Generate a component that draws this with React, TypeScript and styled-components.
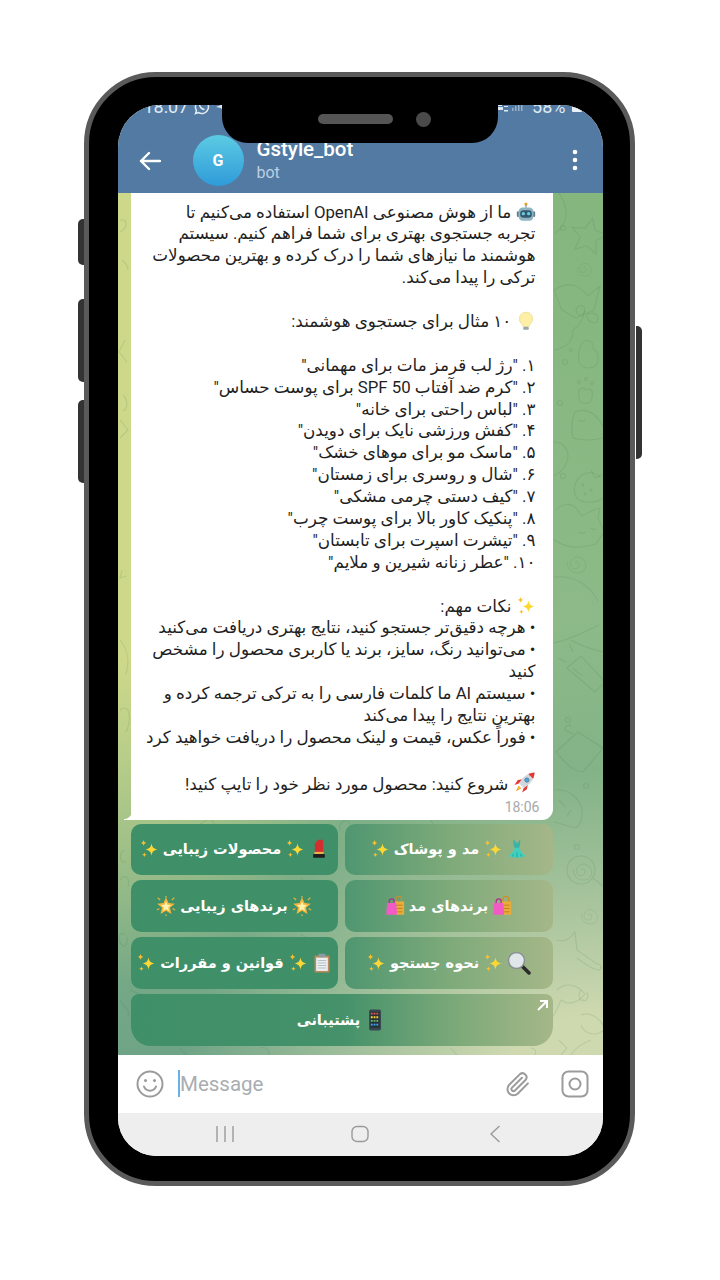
import React from "react";
import styled, { createGlobalStyle } from "styled-components";

const Global = createGlobalStyle`
  html, body { margin: 0; padding: 0; background: #fff; }
  body { width: 720px; height: 1280px; overflow: hidden; font-family: Roboto, "DejaVu Sans", sans-serif; }
`;

const Page = styled.div`
  width: 720px;
  height: 1280px;
  box-sizing: border-box;
  padding: 72px 85px 94px 84px;
`;
const Phone = styled.div`
  position: relative;
  height: 1114px;
  box-sizing: border-box;
  border: 5.5px solid #5a5a5a;
  border-radius: 72px;
  background: #000;
  padding: 27.5px 27.5px 25px 28.5px;
`;
const SideKey = styled.div<{ $side: "left" | "right"; $top: number; $h: number }>`
  position: absolute;
  ${(p) => p.$side}: -11.5px;
  top: ${(p) => p.$top}px;
  width: 6px;
  height: ${(p) => p.$h}px;
  background: #333;
  border-radius: ${(p) => (p.$side === "left" ? "5px 0 0 5px" : "0 5px 5px 0")};
`;
const Notch = styled.div`
  position: absolute;
  left: 132.5px;
  top: 26.5px;
  width: 276px;
  height: 39px;
  background: #000;
  border-radius: 0 0 26px 26px;
  z-index: 3;
  display: flex;
  align-items: center;
  justify-content: center;
  gap: 22.5px;
  padding: 0 0 8px 30px;
  box-sizing: border-box;
`;
const Speaker = styled.div`
  width: 75px;
  height: 10px;
  border-radius: 5px;
  background: #555;
`;
const Lens = styled.div`
  width: 15px;
  height: 15px;
  border-radius: 50%;
  background: #4a4a4a;
`;
const Screen = styled.div`
  height: 100%;
  border-radius: 42px 42px 38px 38px;
  overflow: hidden;
  display: flex;
  flex-direction: column;
  background: #fff;
`;
const Header = styled.header`
  height: 88px;
  flex: none;
  background: #527aa2;
  color: #fff;
  display: flex;
  flex-direction: column;
`;
const StatusBar = styled.div`
  height: 20px;
  margin-top: -8px;
  padding: 0 21px 0 26px;
  display: flex;
  align-items: center;
  justify-content: space-between;
  font-size: 18px;
  color: #dfe9f2;
`;
const StatusGroup = styled.div`
  display: flex;
  align-items: center;
  gap: 6px;
`;
const TitleRow = styled.div`
  flex: 1;
  display: flex;
  align-items: center;
  padding: 10px 25px 0 21px;
`;
const BackButton = styled.div`
  width: 54px;
  display: flex;
  margin-top: 3px;
`;
const Avatar = styled.div`
  width: 51px;
  height: 51px;
  border-radius: 50%;
  background: linear-gradient(180deg, #5ccbe3 0%, #2f9bd9 100%);
  display: flex;
  align-items: center;
  justify-content: center;
  font: 700 16px Roboto, sans-serif;
  margin-top: 2px;
`;
const TitleBlock = styled.div`
  flex: 1;
  margin-left: 13px;
  margin-top: 1px;
`;
const BotName = styled.div`
  font: 500 20.5px/26px Roboto, sans-serif;
`;
const BotStatus = styled.div`
  font: 400 16px/22px Roboto, sans-serif;
  color: #bcd0e2;
`;
const Chat = styled.main`
  position: relative;
  flex: none;
  display: flex;
  flex-direction: column;
  padding: 0 50px 9px 12px;
  background:
    radial-gradient(ellipse 330px 620px at 0% 20%, #cdd88a 0%, #cdd88a 48%, rgba(205, 216, 138, 0) 100%),
    radial-gradient(ellipse 420px 330px at 100% 105%, #cfd9b0 0%, #cfd9b0 25%, rgba(207, 217, 176, 0) 100%),
    linear-gradient(180deg, #84b67e 0%, #8dba88 50%, #6fa486 100%);
`;
const Doodles = styled.svg`
  position: absolute;
  inset: 0;
  width: 100%;
  height: 100%;
`;
const Bubble = styled.section`
  position: relative;
  width: 422px;
  height: 627px;
  flex: none;
  margin-left: 1px;
  box-sizing: border-box;
  background: #fff;
  border-radius: 0 0 11px 0;
  padding: 9px 17px 0 0;
  color: #1f1f1f;
  font-family: Roboto, "DejaVu Sans", sans-serif;
  font-size: 16.8px;
  line-height: 21.9px;

  &::before {
    content: "";
    position: absolute;
    left: -7px;
    bottom: 0;
    width: 8px;
    height: 9px;
    background: radial-gradient(circle at 0 0, transparent 7.5px, #fff 8.5px);
  }
`;
const Line = styled.div`
  direction: rtl;
  white-space: nowrap;
  height: 21.9px;
`;
const Time = styled.div`
  position: absolute;
  right: 13px;
  bottom: 5px;
  font: 400 14px/16px Roboto, sans-serif;
  color: #a8a8a8;
`;
const Keyboard = styled.nav`
  position: relative;
  margin-top: 4px;
  direction: rtl;
  display: grid;
  grid-template-columns: 208px 207px;
  grid-auto-rows: 51.75px;
  gap: 5px 7px;
`;
const KeyButton = styled.button<{ $tone: "left" | "right" | "wide" }>`
  border: 0;
  padding: 0;
  direction: rtl;
  border-radius: ${(p) => (p.$tone === "wide" ? "8px 8px 20px 20px" : "10px")};
  position: relative;
  display: flex;
  align-items: center;
  justify-content: center;
  gap: 4px;
  color: #fff;
  font: 700 14.5px "DejaVu Sans", sans-serif;
  white-space: nowrap;
  ${(p) => (p.$tone === "wide" ? "grid-column: 1 / span 2;" : "")}
  background: ${(p) =>
    p.$tone === "left"
      ? "#3f8f68"
      : p.$tone === "right"
        ? "linear-gradient(90deg, #4f9670 0%, #7eaa7a 50%, #a5b788 100%)"
        : "linear-gradient(90deg, #3f8f68 0%, #44916a 50%, #7eaa7a 78%, #a5b788 100%)"};
`;
const Corner = styled.svg`
  position: absolute;
  top: 5px;
  right: 4px;
`;
const Composer = styled.div`
  height: 58px;
  flex: none;
  display: flex;
  align-items: center;
  padding: 0 14px 0 18px;
  background: #fff;
`;
const Caret = styled.div`
  width: 2.5px;
  height: 27px;
  margin-left: 14px;
  background: #68b0e6;
`;
const Placeholder = styled.div`
  flex: 1;
  font: 400 20.5px Roboto, sans-serif;
  color: #a9adb1;
`;
const ComposerIcons = styled.div`
  display: flex;
  align-items: center;
  gap: 29px;
`;
const NavBar = styled.div`
  flex: 1;
  background: #eeeeee;
  display: grid;
  grid-template-columns: 1fr 1fr 1fr;
  padding: 0 39.5px;
  align-items: center;
  justify-items: center;
`;

const Emoji = styled.svg<{ $s?: number }>`
  display: inline-block;
  width: ${(p) => p.$s ?? 20}px;
  height: ${(p) => p.$s ?? 20}px;
  vertical-align: -4px;
  flex: none;
`;

const Sparkles = () => (
  <Emoji viewBox="0 0 24 24">
    <path fill="#fdd835" d="M15 5c.8 5 2.500 6.600 7.500 7.500-5 .9-6.700 2.500-7.500 7.500-.8-5-2.500-6.600-7.500-7.500C12.500 11.600 14.200 10 15 5z" />
    <path fill="#fbc02d" d="M5.500 1c.4 2.500 1.200 3.300 3.500 3.700C6.700 5.100 5.900 5.900 5.500 8.500 5.100 5.900 4.300 5.100 2 4.700 4.300 4.300 5.100 3.500 5.500 1z" />
    <path fill="#fbc02d" d="M6.500 16c.3 2 1 2.700 3 3-2 .3-2.700 1-3 3-.3-2-1-2.700-3-3 2-.3 2.700-1 3-3z" />
  </Emoji>
);
const Robot = () => (
  <Emoji viewBox="0 0 24 24">
    <circle cx="12" cy="2.500" r="2" fill="#f5a623" />
    <rect x="11.300" y="3" width="1.400" height="4" fill="#78909c" />
    <rect x="1" y="11" width="3" height="7" rx="1.500" fill="#607d8b" />
    <rect x="20" y="11" width="3" height="7" rx="1.500" fill="#607d8b" />
    <rect x="3" y="6.500" width="18" height="16" rx="5" fill="#8fb4c4" />
    <rect x="5" y="10" width="14" height="9" rx="4" fill="#37586b" />
    <circle cx="8.800" cy="14" r="2" fill="#5fd0e6" />
    <circle cx="15.200" cy="14" r="2" fill="#5fd0e6" />
  </Emoji>
);
const Bulb = () => (
  <Emoji viewBox="0 0 24 24">
    <path fill="#fdf0a6" stroke="#eadf95" d="M12 1.500a8 8 0 0 0-5 14.200c1 .9 1.300 1.800 1.400 3.300h7.200c.1-1.500.4-2.400 1.400-3.300A8 8 0 0 0 12 1.500z" />
    <rect x="8.700" y="19" width="6.600" height="3.600" rx="1.400" fill="#9aa7ad" />
  </Emoji>
);
const Rocket = () => (
  <Emoji viewBox="0 0 24 24" $s={23}>
    <path fill="#e53935" d="M6 13l-4.500 1.500L5 9.500l5-1zM11 18l-1.500 4.500L14.500 19l1-5z" />
    <path fill="#cfd8dc" d="M22.500 1.500C15 2 10 6 6.500 13l4.500 4.500C18 14 22 9 22.500 1.500z" />
    <path fill="#e53935" d="M22.500 1.500c-2.400.1-4.600.6-6.500 1.500L21 8c.9-1.900 1.400-4 1.500-6.500z" />
    <circle cx="14.500" cy="9.500" r="2.200" fill="#42a5f5" stroke="#607d8b" />
    <path fill="#fb8c00" d="M6 15.500L3 21l5.500-3z" />
    <path fill="#fdd835" d="M6.300 16.500L4.800 19.200l2.800-1.500z" />
  </Emoji>
);
const Dress = () => (
  <Emoji viewBox="0 0 24 24">
    <path fill="#38b3a6" d="M9.500 1.500l1 3h3l1-3 1.500.3-.5 6-1.500 3.700H9.500L8 7.800l-.5-6z" />
    <path fill="#3ed0c0" d="M9.500 10.500h5c1.200 4.500 4.500 7.500 7.500 9.500-2.500 3-17.500 3-20 0 3-2 6.300-5 7.500-9.500z" />
    <path stroke="#1ea294" fill="none" d="M8 18l-1.500 3M12 16v6M16 18l1.500 3" />
  </Emoji>
);
const Lipstick = () => (
  <Emoji viewBox="0 0 24 24">
    <path fill="#d32f2f" d="M7 17V6l4-5h5l1 2v14z" />
    <rect x="6.500" y="15.500" width="11" height="2.500" fill="#e8b34a" />
    <rect x="5" y="18" width="14" height="4.500" rx="1" fill="#1f1f1f" />
  </Emoji>
);
const Bags = () => (
  <Emoji viewBox="0 0 24 24">
    <path fill="none" stroke="#c98f2b" strokeWidth="1.500" d="M13 8V4a3.500 3.500 0 0 1 7 0v4" />
    <rect x="11" y="6.500" width="12" height="16" fill="#e9ac3a" />
    <path stroke="#b67f1f" d="M13 11h8M13 15h8M13 19h8" />
    <path fill="none" stroke="#ae2f8d" strokeWidth="1.500" d="M5 9V6.500a3 3 0 0 1 6 0V9" />
    <path fill="#f25ac5" d="M2.500 8.500h11l1 14h-13z" />
  </Emoji>
);
const GlowStar = () => (
  <Emoji viewBox="0 0 24 24">
    <path fill="#f6b73c" d="M12 1.500l3 7 7.500.7-5.700 5 1.700 7.300L12 17.600l-6.500 3.900 1.700-7.300-5.700-5 7.500-.7z" />
    <path fill="#fff3b0" d="M12 6.500l1.700 4 4.300.4-3.300 2.900 1 4.200-3.700-2.200-3.700 2.200 1-4.200L6 10.900l4.300-.4z" />
    <path stroke="#f6b73c" strokeWidth="1.300" d="M12 0v2M2 2l3 3M22 2l-3 3M1 17l3-2M23 17l-3-2M12 22v2" />
  </Emoji>
);
const Magnifier = () => (
  <Emoji viewBox="0 0 24 24" $s={24}>
    <path stroke="#2b2b2b" strokeWidth="3.500" strokeLinecap="round" d="M15.500 15.500L22 22" />
    <circle cx="9.500" cy="9.500" r="8" fill="#dfe7ea" stroke="#8a8f93" strokeWidth="1.500" />
  </Emoji>
);
const Clipboard = () => (
  <Emoji viewBox="0 0 24 24">
    <rect x="3" y="3" width="18" height="20.500" rx="1.500" fill="#b98a5c" />
    <rect x="5" y="5.500" width="14" height="16" fill="#eceff1" />
    <rect x="8" y="1" width="8" height="4" rx="1" fill="#8d9ba3" />
    <path stroke="#aab4ba" d="M7 9h10M7 12h10M7 15h10M7 18h10" />
  </Emoji>
);
const Mobile = () => (
  <Emoji viewBox="0 0 24 24" $s={22}>
    <rect x="5.500" y="0.500" width="13" height="23" rx="2" fill="#37474f" />
    <rect x="7" y="3" width="10" height="17.500" fill="#263238" />
    <path stroke="#ef5350" strokeWidth="2" strokeDasharray="2 1" d="M7.500 5h9" />
    <path stroke="#fdd835" strokeWidth="2" strokeDasharray="2 1" d="M7.500 9h9" />
    <path stroke="#66bb6a" strokeWidth="2" strokeDasharray="2 1" d="M7.500 13h9" />
    <path stroke="#42a5f5" strokeWidth="2" strokeDasharray="2 1" d="M7.500 17h9" />
  </Emoji>
);

const S = <Sparkles />;

const lines: React.ReactNode[] = [
  <><Robot /> ما از هوش مصنوعی OpenAI استفاده می‌کنیم تا</>,
  "تجربه جستجوی بهتری برای شما فراهم کنیم. سیستم",
  "هوشمند ما نیازهای شما را درک کرده و بهترین محصولات",
  "ترکی را پیدا می‌کند.",
  "",
  <><Bulb /> ۱۰ مثال برای جستجوی هوشمند:</>,
  "",
  '۱. "رژ لب قرمز مات برای مهمانی"',
  '۲. "کرم ضد آفتاب SPF 50 برای پوست حساس"',
  '۳. "لباس راحتی برای خانه"',
  '۴. "کفش ورزشی نایک برای دویدن"',
  '۵. "ماسک مو برای موهای خشک"',
  '۶. "شال و روسری برای زمستان"',
  '۷. "کیف دستی چرمی مشکی"',
  '۸. "پنکیک کاور بالا برای پوست چرب"',
  '۹. "تیشرت اسپرت برای تابستان"',
  '۱۰. "عطر زنانه شیرین و ملایم"',
  "",
  <><Sparkles /> نکات مهم:</>,
  "• هرچه دقیق‌تر جستجو کنید، نتایج بهتری دریافت می‌کنید",
  "• می‌توانید رنگ، سایز، برند یا کاربری محصول را مشخص",
  "کنید",
  "• سیستم AI ما کلمات فارسی را به ترکی ترجمه کرده و",
  "بهترین نتایج را پیدا می‌کند",
  "• فوراً عکس، قیمت و لینک محصول را دریافت خواهید کرد",
  "",
  <><Rocket /> شروع کنید: محصول مورد نظر خود را تایپ کنید!</>,
];

const keys: { tone: "left" | "right"; content: React.ReactNode }[] = [
  { tone: "right", content: <><Dress />{S}<span>مد و پوشاک</span>{S}</> },
  { tone: "left", content: <><Lipstick />{S}<span>محصولات زیبایی</span>{S}</> },
  { tone: "right", content: <><Bags /><span>برندهای مد</span><Bags /></> },
  { tone: "left", content: <><GlowStar /><span>برندهای زیبایی</span><GlowStar /></> },
  { tone: "right", content: <><Magnifier />{S}<span>نحوه جستجو</span>{S}</> },
  { tone: "left", content: <><Clipboard />{S}<span>قوانین و مقررات</span>{S}</> },
];

const Star = ({ x, y, r = 0 }: { x: number; y: number; r?: number }) => (
  <path transform={`translate(${x} ${y}) rotate(${r})`} d="M0-17l5 11 13 2-10 8 3 13-11-6-11 6 3-13-10-8 13-2z" />
);
const Spiral = ({ x, y, s = 1 }: { x: number; y: number; s?: number }) => (
  <path transform={`translate(${x} ${y}) scale(${s})`} d="M0 0c2-3 6 0 4 4s-9 3-9-3 7-10 13-6 5 15-3 16-14-4-13-12" />
);
const Dot = ({ x, y, r = 2.500 }: { x: number; y: number; r?: number }) => <circle cx={x} cy={y} r={r} />;

const Pattern = () => (
  <Doodles viewBox="0 0 484 862" preserveAspectRatio="none">
    <g transform="translate(-118 -193)" fill="none" stroke="#3f7a4a" strokeOpacity="0.15" strokeWidth="1.100">
      <path d="M558 193c12 18 8 32-4 40" />
      <Star x={588} y={235} r={12} />
      <Dot x={562} y={228} />
      <Spiral x={582} y={268} s={0.7} />
      <path d="M553 290c16-10 26-4 34 6l12-10-6 24-18 8-14-8z" />
      <path d="M575 310c2-6 8-6 9 0-1 6-7 8-9 0zM585 316c5-6 12-2 12 3s-8 6-12-3z" />
      <path d="M572 330c6-4 10-10 12-20" />
      <path d="M553 350c14-2 20-12 19-20" />
      <path d="M580 345c4-8 14-4 12 4 6 2 8 14 0 18-8 3-16-2-14-10-1-4 0-8 2-12z" />
      <Dot x={570} y={350} r={1.500} />
      <Dot x={564} y={362} />
      <path d="M578 398c-2-10 4-12 7-8 4-2 8 0 6 8 0 6-12 8-13 0z" />
      <Dot x={578} y={382} r={1.500} /><Dot x={585} y={379} r={1.500} /><Dot x={591} y={383} r={1.500} />
      <path d="M574 412c10-4 20 0 28 14M574 412c-4 10-4 18-2 26 10 3 22 2 30 0" />
      <path d="M578 420c2 2 4 2 6 0" />
      <Dot x={559} y={403} />
      <path d="M553 442c8 0 14 6 14 14s-6 16-14 20" />
      <path d="M600 478c-6-8-18-6-22 0-6 6-6 18 0 22 8 4 20 2 24-2" />
      <path d="M590 470l4 8 8-4" />
      <Dot x={582} y={485} r={1} /><Dot x={590} y={490} r={1} /><Dot x={584} y={494} r={1} />
      <Dot x={562} y={476} />
      <path d="M555 510c6-6 14-8 20-2l6 8c8-4 14-8 18-8l-2 10 6 14-8 12c-14 4-30 6-44-6" />
      <path d="M578 532c2 2 4 2 6 0M590 528c2 2 3 2 5 1" />
      <Spiral x={574} y={563} s={0.9} />
      <path d="M553 577c20-2 36 8 44 24" />
      <path d="M598 625c-16 8-34 16-46 18M570 640c10 6 24 10 32 12" />
      <path d="M566 668l14-12 24 26-10 10zM572 668c3 4 6 6 10 8" />
      <path d="M572 652l-4-8M565 662l-8-4" />
      <Dot x={567} y={720} />
      <path d="M555 752l22-20 25 16-20 24c-10 0-18-10-27-20z" />
      <path d="M572 734l-8-4c0-4 4-6 6-4" />
      <Dot x={585} y={786} />
      <path d="M553 790c14-2 26 8 28 20 1 8-1 14-6 18l-22-6" />
      <path d="M558 800l6 6M570 810l-4 6" />
      <Dot x={576} y={847} />
      <circle cx="580" cy="870" r="14" />
      <Spiral x={580} y={870} s={0.9} />
      <path d="M592 878l10 8" />
      <Spiral x={587} y={915} s={0.8} />
      <path d="M556 940c8 2 12 0 18-8l2 18 20 14c4 0 6 4 2 6-6 0-22-12-22-12" />
      <path d="M556 990c8-8 20-6 28 4-6 8-16 12-24 6-4 10-6 14-8 16" />
      <path d="M580 990c-4 6 0 12 2 10 4 2 6-2 4-8" />
      <path d="M580 1015c10-4 20 4 24 14-8 8-20 6-24-4" />
      <path d="M558 1040l8 8-6 7M590 1040c-10 4-16 8-20 15" />
      <path d="M120 220c8-2 8 8 0 12M122 260c4 4 6 6 6 10M125 340l-6 12 8 10M123 395c6 6 4 14 0 16M120 420l8 10-8 8M122 570l-2 8 6-2M120 640c8 10 10 20 6 34M120 710c10-8 12 10 6 22" />
      <path d="M124 850c-6 4-4 14 2 12M120 880c6-8 10 0 8 6M125 935c-6-6-8 6-3 10 4 4 6-4 5-8M120 1000c4 8 10 8 8 16" />
      <path d="M200 824l10-6 6 8M340 830c-4-6 6-14 10-6M430 820l6 10M300 878l8 6M440 880l-6 4M130 990l10 4M300 934l6 4M380 990c2-4 8-4 10 0M260 1048c6-2 10 4 8 7M450 1048l6 7M180 1048l6 7M530 1048c4 0 6 3 4 7" />
    </g>
  </Doodles>
);

export default function App() {
  return (
    <>
      <Global />
      <Page>
        <Phone>
          <SideKey $side="left" $top={142} $h={46} />
          <SideKey $side="left" $top={222} $h={83} />
          <SideKey $side="left" $top={323} $h={83} />
          <SideKey $side="right" $top={249} $h={133} />
          <Notch>
            <Speaker />
            <Lens />
          </Notch>
          <Screen>
            <Header>
              <StatusBar>
                <StatusGroup>
                  <span>18:07</span>
                  <svg width="16" height="16" viewBox="0 0 16 16" fill="none" stroke="#dfe9f2" strokeWidth="1.500">
                    <path d="M8 1.500a6.500 6.500 0 0 0-5.500 10l-1 3 3-1A6.500 6.500 0 1 0 8 1.500z" />
                    <path d="M5.500 5c0 3 2.500 5.500 5 5.500" />
                  </svg>
                  <svg width="10" height="10" viewBox="0 0 10 10" fill="#dfe9f2"><path d="M0 5l10-4-3 8-2-3z" /></svg>
                </StatusGroup>
                <StatusGroup>
                  <svg width="30" height="12" viewBox="0 0 30 12" fill="#dfe9f2">
                    <path d="M1 3h5v2H1zM0 6h7v3H0z" />
                    <path d="M8 9h4v1.500H8zM8 5h4v1H8z" />
                    <path opacity=".5" d="M16 7h1.500v3H16zM19 5h1.500v5H19zM22 2h1.500v8H22zM25 0h1.500v10H25z" />
                  </svg>
                  <span>58%</span>
                  <svg width="10" height="10" viewBox="0 0 10 10" fill="#e9f0f6"><rect width="10" height="10" rx="1" /></svg>
                </StatusGroup>
              </StatusBar>
              <TitleRow>
                <BackButton>
                  <svg width="22" height="22" viewBox="0 0 22 22" fill="none" stroke="#fff" strokeWidth="2.400" strokeLinecap="round" strokeLinejoin="round">
                    <path d="M2 11h19M10 3l-8 8 8 8" />
                  </svg>
                </BackButton>
                <Avatar>G</Avatar>
                <TitleBlock>
                  <BotName>Gstyle_bot</BotName>
                  <BotStatus>bot</BotStatus>
                </TitleBlock>
                <svg width="6" height="22" viewBox="0 0 6 22" fill="#fff">
                  <circle cx="3" cy="3" r="2.300" />
                  <circle cx="3" cy="11" r="2.300" />
                  <circle cx="3" cy="19" r="2.300" />
                </svg>
              </TitleRow>
            </Header>
            <Chat>
              <Pattern />
              <Bubble>
                {lines.map((l, i) => (
                  <Line key={i}>{l}</Line>
                ))}
                <Time>18:06</Time>
              </Bubble>
              <Keyboard>
                {keys.map((k, i) => (
                  <KeyButton key={i} $tone={k.tone}>{k.content}</KeyButton>
                ))}
                <KeyButton $tone="wide">
                  <Mobile />
                  <span>پشتیبانی</span>
                  <Corner width="12" height="12" viewBox="0 0 12 12" fill="none" stroke="#fff" strokeWidth="2">
                    <path d="M1 11L10 2M3 2h7v7" />
                  </Corner>
                </KeyButton>
              </Keyboard>
            </Chat>
            <Composer>
              <svg width="28" height="28" viewBox="0 0 28 28" fill="none" stroke="#9b9b9b" strokeWidth="2" strokeLinecap="round">
                <circle cx="14" cy="14" r="12.500" />
                <path d="M8 16.500c2 5.500 10 5.500 12 0" />
                <circle cx="9.500" cy="10.500" r="1.500" fill="#9b9b9b" stroke="none" />
                <circle cx="18.500" cy="10.500" r="1.500" fill="#9b9b9b" stroke="none" />
              </svg>
              <Caret />
              <Placeholder>Message</Placeholder>
              <ComposerIcons>
                <svg width="28" height="28" viewBox="0 0 24 24" fill="none" stroke="#9b9b9b" strokeWidth="1.700" strokeLinecap="round" strokeLinejoin="round">
                  <path d="M20.500 11.500l-8.600 8.600a5.200 5.200 0 0 1-7.400-7.400l9.200-9.200a3.500 3.500 0 0 1 4.900 4.900l-9.200 9.200a1.700 1.700 0 0 1-2.500-2.500l8.500-8.500" />
                </svg>
                <svg width="28" height="28" viewBox="0 0 28 28" fill="none" stroke="#9b9b9b" strokeWidth="2">
                  <rect x="1.500" y="1.500" width="25" height="25" rx="6" />
                  <circle cx="14" cy="14" r="5.500" />
                </svg>
              </ComposerIcons>
            </Composer>
            <NavBar>
              <svg width="20" height="18" viewBox="0 0 20 18" fill="none" stroke="#9a9a9a" strokeWidth="1.400">
                <path d="M2 1v16M10 1v16M18 1v16" />
              </svg>
              <svg width="18" height="18" viewBox="0 0 18 18" fill="none" stroke="#9a9a9a" strokeWidth="1.400">
                <rect x="1" y="1.500" width="16" height="15" rx="5" />
              </svg>
              <svg width="12" height="18" viewBox="0 0 12 18" fill="none" stroke="#9a9a9a" strokeWidth="1.400">
                <path d="M10.500 1L2 9l8.500 8" />
              </svg>
            </NavBar>
          </Screen>
        </Phone>
      </Page>
    </>
  );
}
